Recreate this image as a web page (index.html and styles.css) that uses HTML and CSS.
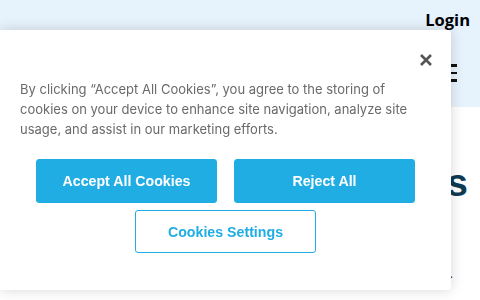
FILE: index.html
```html
<!DOCTYPE html>
<html lang="en">
<head>
  <meta charset="UTF-8" />
  <meta name="viewport" content="width=device-width, initial-scale=1.0"/>
  <title>Cookies</title>
  <link rel="stylesheet" href="styles.css">
</head>
<body>
  <header class="site-header">
    <a class="login" href="#">Login</a>
    <div class="menu-toggle">
      <span></span>
      <span></span>
      <span></span>
    </div>
  </header>

  <main class="content">
    <h1 class="page-title">Services</h1>
    <p class="dot">.</p>
  </main>

  <div class="cookie-banner" role="dialog">
    <button class="close-btn" aria-label="Close">
      <svg width="14" height="14" viewBox="0 0 14 14">
        <path d="M2 2 L12 12 M12 2 L2 12" stroke="#555" stroke-width="2.6" stroke-linecap="butt" />
      </svg>
    </button>
    <p class="cookie-text">By clicking “Accept All Cookies”, you agree to the storing of cookies on your device to enhance site navigation, analyze site usage, and assist in our marketing efforts.</p>
    <div class="cookie-buttons">
      <button class="btn btn-filled">Accept All Cookies</button>
      <button class="btn btn-filled">Reject All</button>
      <button class="btn btn-outline">Cookies Settings</button>
    </div>
  </div>
</body>
</html>
```

FILE: styles.css
```css
* {
  margin: 0;
  padding: 0;
  box-sizing: border-box;
}

body {
  font-family: "Open Sans", sans-serif;
  background: #fff;
  width: 480px;
  height: 300px;
  overflow: hidden;
}

.site-header {
  height: 107px;
  background: #e6f2fc;
  display: flex;
  flex-direction: column;
  align-items: flex-end;
  padding: 8px 10px 0 0;
}

.login {
  color: #000;
  font-weight: 700;
  font-size: 16.5px;
  text-decoration: none;
  line-height: 24px;
}

.menu-toggle {
  margin-top: 32px;
  margin-right: 13px;
  width: 18px;
  display: flex;
  flex-direction: column;
  gap: 5px;
}

.menu-toggle span {
  display: block;
  height: 2.5px;
  background: #111;
}

.content {
  display: flex;
  flex-direction: column;
  align-items: flex-end;
  padding: 56px 12px 0 0;
}

.page-title {
  font-family: "Liberation Sans", sans-serif;
  font-weight: 700;
  font-size: 38px;
  line-height: 40px;
  color: #0e3a52;
}

.dot {
  margin-top: 62px;
  margin-right: 15px;
  font-size: 12px;
  color: #222;
}

.cookie-banner {
  position: fixed;
  left: 0;
  top: 30px;
  width: 451px;
  height: 260px;
  background: #fff;
  border-radius: 0 4px 4px 0;
  box-shadow: 0 0 14px rgba(0, 0, 0, 0.16);
  padding: 49px 0 0 0;
}

.close-btn {
  position: absolute;
  top: 23px;
  right: 18px;
  width: 14px;
  height: 14px;
  border: none;
  background: none;
  cursor: pointer;
}

.close-btn svg {
  display: block;
}

.cookie-text {
  font-family: Inter, sans-serif;
  font-size: 13px;
  line-height: 20px;
  color: #6a6a6a;
  padding: 0 40px 0 20px;
}

.cookie-buttons {
  display: flex;
  flex-wrap: wrap;
  justify-content: center;
  gap: 7px 17px;
  padding: 0 36px;
  margin-top: 20px;
}

.btn {
  width: 181px;
  height: 44px;
  border-radius: 3px;
  font-family: "Liberation Sans", sans-serif;
  font-weight: 700;
  font-size: 14.2px;
  cursor: pointer;
}

.btn-filled {
  background: #20ade3;
  border: 1px solid #20ade3;
  color: #fff;
}

.btn-outline {
  height: 43px;
  background: #fff;
  border: 1px solid #20ade3;
  color: #20ade3;
}
```
